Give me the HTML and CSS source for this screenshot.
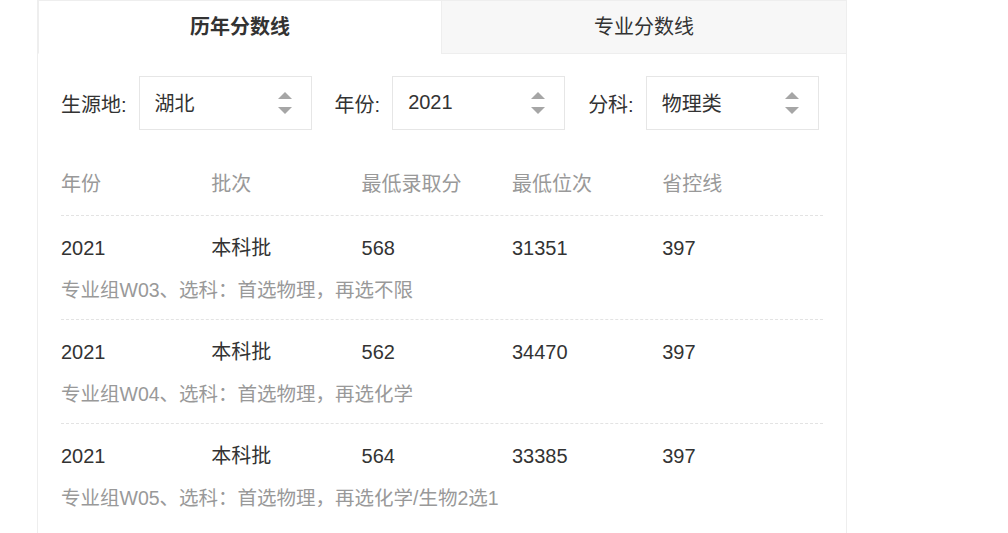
FILE: index.html
```html
<!DOCTYPE html>
<html lang="zh-CN">
<head>
<meta charset="utf-8">
<title>历年分数线</title>
<link rel="stylesheet" href="styles.css">
</head>
<body>
<div class="panel">
  <div class="tabs">
    <div class="tab active">历年分数线</div>
    <div class="tab">专业分数线</div>
  </div>
  <div class="body">
    <div class="filters">
      <span class="label">生源地:</span>
      <div class="select"><span>湖北</span><i class="arrows"></i></div>
      <span class="label">年份:</span>
      <div class="select"><span>2021</span><i class="arrows"></i></div>
      <span class="label">分科:</span>
      <div class="select"><span>物理类</span><i class="arrows"></i></div>
    </div>
    <div class="table">
      <div class="row head">
        <span>年份</span><span>批次</span><span>最低录取分</span><span>最低位次</span><span>省控线</span>
      </div>
      <div class="row">
        <span>2021</span><span>本科批</span><span>568</span><span>31351</span><span>397</span>
        <p class="note">专业组W03、选科：首选物理，再选不限</p>
      </div>
      <div class="row">
        <span>2021</span><span>本科批</span><span>562</span><span>34470</span><span>397</span>
        <p class="note">专业组W04、选科：首选物理，再选化学</p>
      </div>
      <div class="row">
        <span>2021</span><span>本科批</span><span>564</span><span>33385</span><span>397</span>
        <p class="note">专业组W05、选科：首选物理，再选化学/生物2选1</p>
      </div>
    </div>
  </div>
</div>
</body>
</html>
```

FILE: styles.css
```css
* { box-sizing: border-box; }
html, body { margin: 0; padding: 0; background: #fff; }
body {
  font-family: "Liberation Sans", "Noto Sans CJK SC", sans-serif;
  color: #333;
  font-size: 20px;
}
.panel {
  width: 810px;
  margin-left: 37px;
  border: 1px solid #eee;
  border-bottom: none;
  min-height: 540px;
}
.tabs {
  display: flex;
  height: 53px;
}
.tab {
  flex: 0 0 403px;
  display: flex;
  align-items: center;
  justify-content: center;
  font-size: 20px;
  padding-bottom: 3px;
  background: #f7f7f7;
  border-bottom: 1px solid #eee;
  border-left: 1px solid #eee;
}
.tab + .tab { flex: 1 1 auto; }
.tab.active {
  background: #fff;
  font-weight: bold;
  border-bottom-color: #fff;
  border-left: 1px solid #eee;
}
.body {
  padding: 22px 23px 0 23px;
}
.filters {
  display: flex;
  align-items: center;
  height: 54px;
}
.label {
  margin-right: 12px;
  white-space: nowrap;
}
.select {
  position: relative;
  width: 173px;
  height: 54px;
  border: 1px solid #e6e6e6;
  padding-left: 15px;
  padding-bottom: 1px;
  display: flex;
  align-items: center;
  margin-right: 23px;
}
.select:last-child { margin-right: 0; }
.arrows {
  position: absolute;
  right: 19px;
  top: 15px;
  width: 14px;
  height: 22px;
}
.arrows::before, .arrows::after {
  content: "";
  position: absolute;
  left: 0;
  border-left: 7px solid transparent;
  border-right: 7px solid transparent;
}
.arrows::before { top: 0; border-bottom: 7px solid #a6a6a6; }
.arrows::after { bottom: 0; border-top: 7px solid #a6a6a6; }
.table { margin-top: 39px; }
.row {
  display: grid;
  grid-template-columns: repeat(5, 150.3px);
  border-bottom: 1px dashed #e3e3e3;
  padding: 17px 0 14px;
  line-height: 30px;
}
.row:last-child { border-bottom: none; }
.row.head {
  padding: 0 0 16px;
  color: #999;
}
.note {
  grid-column: 1 / -1;
  margin: 12px 0 0;
  color: #999;
  font-size: 19.5px;
  white-space: nowrap;
}
```
